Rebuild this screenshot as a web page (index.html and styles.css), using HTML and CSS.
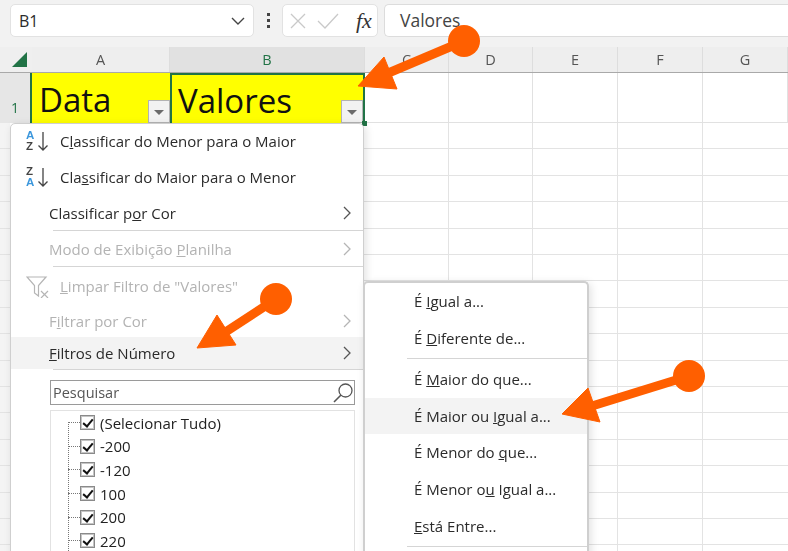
FILE: index.html
```html
<!DOCTYPE html>
<html lang="pt-BR">

<head>
    <meta charset="utf-8">
    <meta name="viewport" content="width=device-width, initial-scale=1.0">
    <title>Filtros de Número</title>
    <link rel="stylesheet" href="styles.css">
</head>

<body>

    <div class="app">

        <header class="toolbar">
            <div class="namebox">
                <span>B1</span>
                <svg width="14" height="8" viewBox="0 0 14 8"><path d="M1 1l6 6 6-6" fill="none" stroke="#444" stroke-width="1.4"/></svg>
            </div>
            <div class="dots"><i></i><i></i><i></i></div>
            <div class="fxbox">
                <svg width="16" height="16" viewBox="0 0 16 16"><path d="M1 1l14 14M15 1L1 15" fill="none" stroke="#c9c9c9" stroke-width="1.3"/></svg>
                <svg width="22" height="16" viewBox="0 0 22 16"><path d="M1 8l7 7L21 1" fill="none" stroke="#c9c9c9" stroke-width="1.3"/></svg>
                <span class="fx">fx</span>
            </div>
            <div class="formula">Valores</div>
        </header>

        <div class="colheads">
            <div class="corner">
                <svg width="16" height="15" viewBox="0 0 16 15"><path d="M0 15L15 0v15z" fill="#217346"/></svg>
            </div>
            <div class="colhead">A</div>
            <div class="colhead selected">B</div>
            <div class="colhead">C</div>
            <div class="colhead">D</div>
            <div class="colhead">E</div>
            <div class="colhead">F</div>
            <div class="colhead">G</div>
        </div>

        <div class="row1">
            <div class="rowhead">1</div>
            <div class="cell cell-a">Data<span class="filterbtn"></span></div>
            <div class="cell cell-b">Valores<span class="filterbtn"></span><span class="handle"></span></div>
            <div class="blank"></div>
            <div class="blank"></div>
            <div class="blank"></div>
            <div class="blank"></div>
            <div class="blank"></div>
        </div>

        <div class="gridrows"></div>

    </div>

    <!-- menu do filtro -->
    <div class="menu menu-filter">
        <div class="item item-sort">
            <div class="sorticon">
                <span class="az-blue">A</span>
                <span class="az-dark">Z</span>
            </div>
            <svg class="sortarrow" width="12" height="20" viewBox="0 0 12 20"><path d="M6 1v18M1.500 14.500l4.500 4.500 4.500-4.500" fill="none" stroke="#444" stroke-width="1.300"/></svg>
            <span class="label">C<u>l</u>assificar do Menor para o Maior</span>
        </div>
        <div class="item item-sort">
            <div class="sorticon">
                <span class="az-dark">Z</span>
                <span class="az-blue">A</span>
            </div>
            <svg class="sortarrow" width="12" height="20" viewBox="0 0 12 20"><path d="M6 1v18M1.500 14.500l4.500 4.500 4.500-4.500" fill="none" stroke="#444" stroke-width="1.300"/></svg>
            <span class="label">Cla<u>s</u>sificar do Maior para o Menor</span>
        </div>
        <div class="item item-plain">
            <span>Classificar p<u>o</u>r Cor</span>
            <svg class="chev" width="9" height="14" viewBox="0 0 9 14"><path d="M1 1l6 6-6 6" fill="none" stroke="#555" stroke-width="1.300"/></svg>
        </div>
        <div class="sep"></div>
        <div class="item item-plain off">
            <span>Modo de Exibição <u>P</u>lanilha</span>
            <svg class="chev" width="9" height="14" viewBox="0 0 9 14"><path d="M1 1l6 6-6 6" fill="none" stroke="#b5b5b5" stroke-width="1.300"/></svg>
        </div>
        <div class="sep"></div>
        <div class="item item-clear off">
            <svg class="clearicon" width="24" height="24" viewBox="0 0 24 24">
                <path d="M1 3h19l-7.500 8.500V22l-4-3v-7.500z" fill="none" stroke="#b5b5b5" stroke-width="1.200"/>
                <path d="M15 17l7 7M22 17l-7 7" fill="none" stroke="#b5b5b5" stroke-width="1.200"/>
            </svg>
            <span><u>L</u>impar Filtro de "Valores"</span>
        </div>
        <div class="item item-plain item-short off">
            <span>F<u>i</u>ltrar por Cor</span>
            <svg class="chev" width="9" height="14" viewBox="0 0 9 14"><path d="M1 1l6 6-6 6" fill="none" stroke="#b5b5b5" stroke-width="1.300"/></svg>
        </div>
        <div class="item item-plain item-short hover">
            <span><u>F</u>iltros de Número</span>
            <svg class="chev" width="9" height="14" viewBox="0 0 9 14"><path d="M1 1l6 6-6 6" fill="none" stroke="#555" stroke-width="1.300"/></svg>
        </div>
        <div class="sep"></div>

        <div class="search">
            <span>Pesquisar</span>
            <svg width="22" height="22" viewBox="0 0 22 22"><circle cx="13.500" cy="8.500" r="6.500" fill="none" stroke="#555" stroke-width="1.300"/><path d="M9 13l-7 7" stroke="#555" stroke-width="1.600"/></svg>
        </div>

        <div class="list">
            <div class="tree">
                <div class="node"><span class="branch"></span><span class="check"></span>(Selecionar Tudo)</div>
                <div class="node"><span class="branch"></span><span class="check"></span>-200</div>
                <div class="node"><span class="branch"></span><span class="check"></span>-120</div>
                <div class="node"><span class="branch"></span><span class="check"></span>100</div>
                <div class="node"><span class="branch"></span><span class="check"></span>200</div>
                <div class="node"><span class="branch"></span><span class="check"></span>220</div>
            </div>
        </div>
    </div>

    <!-- submenu -->
    <div class="menu menu-sub">
        <div class="subitem">É <u>I</u>gual a...</div>
        <div class="subitem">É <u>D</u>iferente de...</div>
        <div class="sep sep-sub"></div>
        <div class="subitem">É <u>M</u>aior do que...</div>
        <div class="subitem hover">É Maior ou <u>I</u>gual a...</div>
        <div class="subitem">É Menor do <u>q</u>ue...</div>
        <div class="subitem">É Menor o<u>u</u> Igual a...</div>
        <div class="subitem"><u>E</u>stá Entre...</div>
        <div class="sep sep-sub"></div>
    </div>

    <!-- setas por cima do print -->
    <svg class="arrows" width="788" height="551" viewBox="0 0 788 551">
        <g fill="#ff5f00" stroke="#ff5f00">
            <path d="M464 41L386 74" stroke-width="9"/>
            <path d="M358 86L384 57L397 89z" stroke-width="1"/>
            <circle cx="464" cy="41" r="16" stroke="none"/>
            <path d="M276 299L224 333" stroke-width="9"/>
            <path d="M197 348L217 315L236 345z" stroke-width="1"/>
            <circle cx="276" cy="299" r="16" stroke="none"/>
            <path d="M689 376L592 406" stroke-width="9"/>
            <path d="M562 414L588 388L600 422z" stroke-width="1"/>
            <circle cx="689" cy="376" r="16" stroke="none"/>
        </g>
    </svg>

</body>

</html>
```

FILE: styles.css
```css
html {
    font-family: "Open Sans", "Noto Sans", sans-serif;
}

body {
    margin: 0;
    width: 788px;
    height: 551px;
    overflow: hidden;
    position: relative;
    background-color: white;
    color: #2b2b2b;
    filter: blur(0.3px);
}

.app {
    display: flex;
    flex-direction: column;
    height: 551px;
}

.toolbar {
    display: flex;
    align-items: center;
    height: 47px;
    padding: 4px 0 10px 10px;
    box-sizing: border-box;
    background-color: #f2f2f2;
}

.namebox {
    display: flex;
    align-items: center;
    justify-content: space-between;
    width: 244px;
    height: 33px;
    box-sizing: border-box;
    padding: 0 8px 0 8px;
    background-color: white;
    border: 1px solid #e2e2e2;
    border-radius: 5px;
    font-size: 16px;
}

.dots {
    display: flex;
    flex-direction: column;
    gap: 3px;
    width: 28px;
    align-items: center;
}

.dots i {
    width: 3px;
    height: 3px;
    background-color: #444;
}

.fxbox {
    display: flex;
    align-items: center;
    gap: 11px;
    width: 96px;
    height: 33px;
    box-sizing: border-box;
    padding-left: 7px;
    background-color: white;
    border: 1px solid #e2e2e2;
    border-radius: 5px;
}

.fx {
    margin-left: 6px;
    font-family: "Liberation Serif", serif;
    font-style: italic;
    font-size: 22px;
    color: #333;
}

.formula {
    flex: 1;
    height: 33px;
    margin-left: 6px;
    box-sizing: border-box;
    padding-left: 15px;
    line-height: 31px;
    background-color: white;
    border: 1px solid #dcdcdc;
    border-right: 0;
    border-radius: 5px 0 0 5px;
    font-size: 17.500px;
    color: #444;
}

.colheads,
.row1 {
    display: grid;
    grid-template-columns: 32px 138px 195px 84px 84px 85px 85px 85px;
}

.colheads {
    height: 26px;
    background-color: #eeeeee;
    border-bottom: 1px solid #a9a9a9;
    box-sizing: border-box;
}

.corner {
    display: flex;
    align-items: flex-end;
    justify-content: flex-end;
    padding: 0 4px 5px 0;
    background-color: #efefef;
    box-sizing: border-box;
}

.colhead {
    display: flex;
    align-items: center;
    justify-content: center;
    border-right: 1px solid #dddddd;
    font-size: 14.500px;
    color: #555;
}

.colhead.selected {
    background-color: #e1e1e1;
    color: #217346;
}

.row1 {
    height: 50px;
    grid-auto-rows: 50px;
}

.rowhead {
    display: flex;
    align-items: flex-end;
    justify-content: center;
    padding-bottom: 6px;
    background-color: #e6e6e6;
    border-right: 2px solid #217346;
    box-sizing: border-box;
    font-size: 14px;
    color: #217346;
}

.cell {
    position: relative;
    box-sizing: border-box;
    background-color: #ffff00;
    padding-left: 7px;
    font-size: 33px;
    line-height: 54px;
    color: #111;
}

.cell-b {
    border: 2px solid #217346;
    border-bottom: 0;
    padding-left: 6px;
    line-height: 52px;
}

.filterbtn {
    position: absolute;
    right: 0;
    bottom: 0;
    width: 22px;
    height: 23px;
    box-sizing: border-box;
    background-color: #f2f2f2;
    border: 1px solid #b3b3b3;
}

.filterbtn::after {
    content: "";
    position: absolute;
    left: 5px;
    top: 9px;
    border-left: 5px solid transparent;
    border-right: 5px solid transparent;
    border-top: 5px solid #6b6b6b;
}

.handle {
    position: absolute;
    right: -4px;
    bottom: -3px;
    width: 5px;
    height: 5px;
    background-color: #217346;
}

.blank {
    border-right: 1px solid #e1e1e1;
    border-bottom: 1px solid #e1e1e1;
}

.gridrows {
    flex: 1;
    background-image:
        repeating-linear-gradient(to bottom, transparent 0, transparent 25.4px, #e3e3e3 25.4px, #e3e3e3 26.4px),
        linear-gradient(to right, #f4f4f4 10px, transparent 10px, transparent 448px, #e3e3e3 448px, #e3e3e3 449px, transparent 449px, transparent 532px, #e3e3e3 532px, #e3e3e3 533px, transparent 533px, transparent 617px, #e3e3e3 617px, #e3e3e3 618px, transparent 618px, transparent 702px, #e3e3e3 702px, #e3e3e3 703px, transparent 703px);
}

.menu {
    position: absolute;
    box-sizing: border-box;
    background-color: white;
    border: 1px solid #cfcfcf;
    border-radius: 5px 5px 0 0;
    box-shadow: 2px 2px 8px rgba(0, 0, 0, 0.12);
}

.menu-filter {
    left: 10px;
    top: 123px;
    width: 354px;
    height: 440px;
}

.menu-sub {
    left: 363px;
    top: 281px;
    width: 226px;
    height: 280px;
    border-width: 2px 2px 0;
}

.item {
    display: flex;
    align-items: center;
    font-size: 15px;
}

.item-sort {
    height: 36px;
    padding-left: 15px;
}

.item-sort:first-child {
    height: 37px;
    margin-top: -2px;
}

.item-plain {
    height: 35px;
    justify-content: space-between;
    padding: 0 11px 0 38px;
}

.item-short {
    height: 32px;
}

.item-clear {
    height: 38px;
    gap: 10px;
    padding-left: 15px;
}

.off {
    color: #b3b3b3;
}

.hover {
    background-color: #f3f3f3;
}

.sep {
    height: 1px;
    margin-left: 42px;
    background-color: #d5d5d5;
}

.sep-sub {
    margin: 2px 0 2px 42px;
}

.sorticon {
    display: flex;
    flex-direction: column;
    width: 11px;
    font-family: "Liberation Sans", sans-serif;
    font-size: 11.500px;
    font-weight: bold;
    line-height: 11px;
}

.sortarrow {
    flex: none;
}

.label {
    margin-left: 11px;
}

.clearicon {
    flex: none;
}

.az-blue {
    color: #3c97dc;
}

.az-dark {
    color: #444;
}

.search {
    display: flex;
    align-items: center;
    justify-content: space-between;
    height: 25px;
    margin: 10px 8px 0 39px;
    padding: 0 0 0 2px;
    box-sizing: border-box;
    border: 1px solid #9a9a9a;
    font-size: 14.500px;
    color: #555;
}

.list {
    height: 160px;
    margin: 5px 8px 0 39px;
    border: 1px solid #e2e2e2;
    padding: 0 0 0 17px;
}

.tree {
    position: relative;
}

.tree::before {
    content: "";
    position: absolute;
    left: 0;
    top: 13px;
    bottom: 0;
    border-left: 1px dotted #777;
}

.node {
    display: flex;
    align-items: center;
    height: 23.600px;
    font-size: 15px;
    color: #222;
}

.branch {
    width: 12px;
    border-top: 1px dotted #777;
}

.check {
    position: relative;
    width: 15px;
    height: 15px;
    margin-right: 5px;
    box-sizing: border-box;
    border: 1px solid #8a8a8a;
    outline: 1px solid #c5c5c5;
    outline-offset: -2px;
    background-color: white;
}

.check::after {
    content: "";
    position: absolute;
    left: 4px;
    top: 1px;
    width: 4px;
    height: 8px;
    border-right: 2px solid #111;
    border-bottom: 2px solid #111;
    transform: rotate(40deg);
}

.subitem {
    height: 36.600px;
    line-height: 36.600px;
    padding-left: 49px;
    font-size: 15px;
}

.arrows {
    position: absolute;
    left: 0;
    top: 0;
}
```
